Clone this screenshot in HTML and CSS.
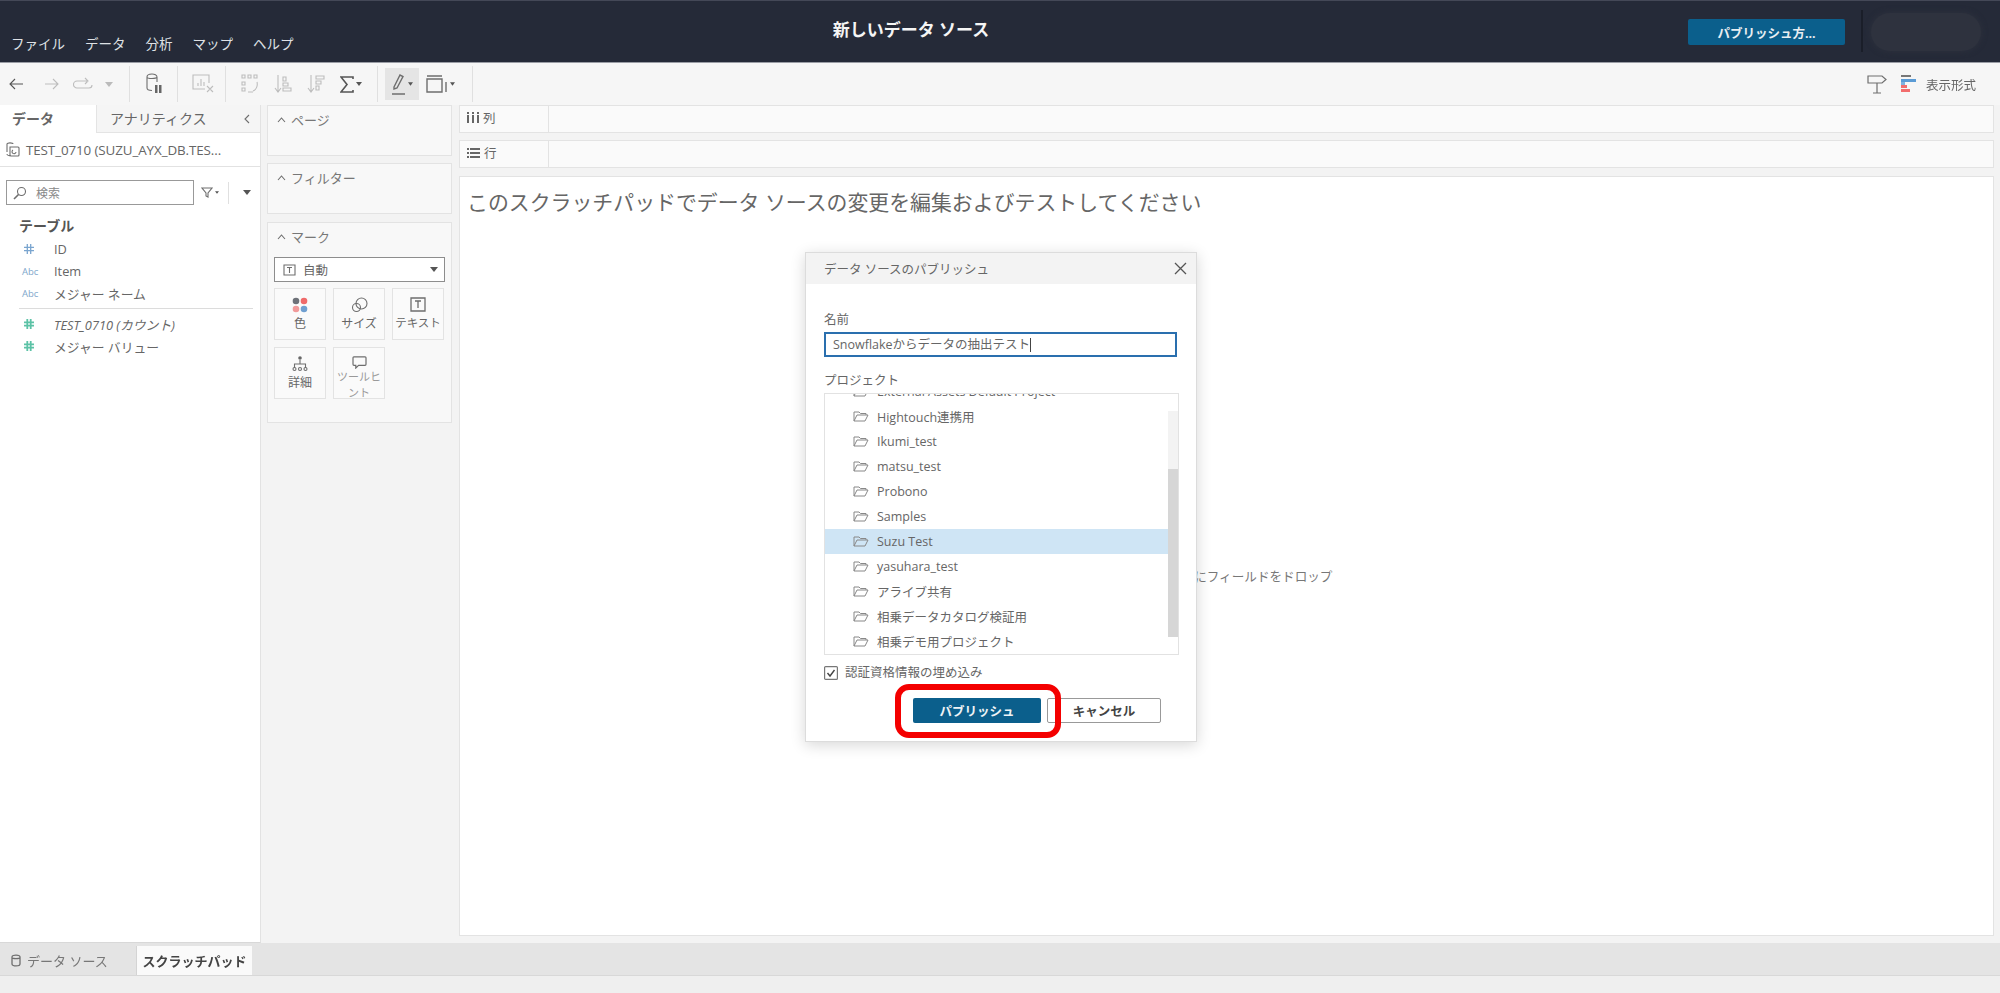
FILE: index.html
```html
<!DOCTYPE html>
<html lang="ja">
<head>
<meta charset="utf-8">
<title>新しいデータ ソース</title>
<link rel="stylesheet" href="styles.css">
</head>
<body>
<div class="app">
  <header class="topbar">
    <nav class="menu"><span>ファイル</span><span>データ</span><span>分析</span><span>マップ</span><span>ヘルプ</span></nav>
    <div class="doc-title">新しいデータ ソース</div>
    <div class="top-right">
      <button class="pub-top">パブリッシュ方...</button>
      <div class="top-div"></div>
      <div class="avatar"></div>
    </div>
  </header>

  <div class="toolbar">
    <div class="tb-group g1">
      <svg class="ic dark" width="16" height="14" viewBox="0 0 16 14"><path d="M15 7H2M7 2L2 7l5 5"/></svg>
      <svg class="ic faint fwd" width="16" height="14" viewBox="0 0 16 14"><path d="M1 7h13M9 2l5 5-5 5"/></svg>
      <svg class="ic faint redo" width="20" height="14" viewBox="0 0 20 14"><path d="M14 4H4a3 3 0 0 0 0 7h12a3 3 0 0 0 3-3M12 1l3 3-3 3"/></svg>
      <svg class="fill-faint caret8" width="8" height="5" viewBox="0 0 8 5"><path d="M0 0h8L4 5z"/></svg>
    </div>
    <div class="tb-group g2">
      <svg class="ic mid" width="16" height="22" viewBox="0 0 16 22"><path d="M1 4c0-4 10-4 10 0v5M1 4c0 2 10 2 10 0M1 4v11c0 1.500 2 2.500 5 2.500"/><path class="solid" d="M9 12h2.500v8H9zM13 12h2.500v8H13z"/></svg>
    </div>
    <div class="tb-group g3">
      <svg class="ic faint" width="23" height="20" viewBox="0 0 23 20"><path d="M13 15H1V1h16v8M6 12V9M9 12V5M12 12V8M15 12l6 6M21 12l-6 6"/></svg>
    </div>
    <div class="tb-group g4">
      <svg class="ic faint" width="18" height="20" viewBox="0 0 18 20"><path d="M1 1h3v3H1zM7 1h3v3H7zM13 1h3v3h-3zM1 8h3v3H1zM1 14h3v3H1zM7 18h5M16 8c1 4-1 8-4 9"/></svg>
      <svg class="ic faint" width="18" height="20" viewBox="0 0 18 20"><path d="M4 1v16M1 14l3 4 3-4M9 3h3v4H9zM9 9h5v3H9zM9 14h8v3H9z"/></svg>
      <svg class="ic faint" width="18" height="20" viewBox="0 0 18 20"><path d="M4 1v16M1 14l3 4 3-4M9 2h8v3H9zM9 7h5v3H9zM9 12h3v4H9z"/></svg>
      <span class="tool-pair"><svg class="ic dark" width="14" height="17" viewBox="0 0 14 17"><path d="M13 3V1H1l6 7.500L1 16h12v-2" stroke-width="1.600"/></svg><svg class="fill-dark" width="6" height="4" viewBox="0 0 6 4"><path d="M0 0h6L3 4z"/></svg></span>
    </div>
    <div class="tb-group g5">
      <span class="tool-pair active"><svg class="ic mid" width="15" height="21" viewBox="0 0 15 21"><path d="M3 13L9 1l3 1.500L6 14l-3 1zM1 20h13" stroke-width="1.400"/></svg><svg class="fill-dark" width="5" height="4" viewBox="0 0 6 4"><path d="M0 0h6L3 4z"/></svg></span>
      <span class="tool-pair"><svg class="ic mid" width="22" height="20" viewBox="0 0 22 20"><path d="M1 5h15v13H1zM1 2h15M20 8v10" stroke-width="1.400"/></svg><svg class="fill-dark" width="5" height="4" viewBox="0 0 6 4"><path d="M0 0h6L3 4z"/></svg></span>
    </div>
    <div class="tb-right">
      <svg class="ic mid" width="20" height="20" viewBox="0 0 20 20"><path d="M1 2h14l4 3.500L15 9H1zM10 9v10M6 19h8" stroke-width="1.200"/></svg>
      <span class="fmt">
        <svg width="15" height="18" viewBox="0 0 15 18"><path fill="#777" d="M0 0h10v2H0z"/><path fill="#5b9bd5" d="M0 4h15v3H0z"/><path fill="#7fb2e0" d="M0 7h4v3H0z"/><path fill="#f26d6d" d="M0 10h6v3H0zM0 14h9v3H0z"/></svg>
        <span>表示形式</span>
      </span>
    </div>
  </div>

  <main class="main">
    <aside class="data-pane">
      <div class="tabs">
        <div class="tab on">データ</div>
        <div class="tab off">アナリティクス<svg class="ic mid chev" width="6" height="10" viewBox="0 0 6 10"><path d="M5 1L1 5l4 4"/></svg></div>
      </div>
      <div class="source">
        <svg class="ic mid" width="14" height="15" viewBox="0 0 14 15"><path d="M1 10V2c0-1.500 6-1.500 6 0M5 14c-2 0-4-1-4-2M4 5h8a1 1 0 0 1 1 1v7a1 1 0 0 1-1 1H5a1 1 0 0 1-1-1zM7 8a2 2 0 1 0 3 2"/></svg>
        <span>TEST_0710 (SUZU_AYX_DB.TES...</span>
      </div>
      <div class="search-row">
        <div class="search">
          <svg class="ic mid" width="14" height="14" viewBox="0 0 14 14"><circle cx="8.500" cy="5.500" r="4"/><path d="M5.500 8.500L1 13" stroke-width="1.600"/></svg>
          <span>検索</span>
        </div>
        <svg class="ic mid" width="12" height="11" viewBox="0 0 12 11"><path d="M1 1h10L7 6v4L5 9V6z"/></svg>
        <svg class="fill-dark tiny" width="4" height="3" viewBox="0 0 6 4"><path d="M0 0h6L3 4z"/></svg>
        <div class="search-sep"></div>
        <svg class="fill-dark" width="8" height="5" viewBox="0 0 8 5"><path d="M0 0h8L4 5z"/></svg>
      </div>
      <div class="group-title">テーブル</div>
      <div class="field"><svg class="type-hash blue" width="10" height="10" viewBox="0 0 10 10"><path d="M3.300 0v10M6.700 0v10M0 3.300h10M0 6.700h10"/></svg><span>ID</span></div>
      <div class="field"><span class="type abc">Abc</span><span>Item</span></div>
      <div class="field"><span class="type abc">Abc</span><span>メジャー ネーム</span></div>
      <div class="field-div"></div>
      <div class="field"><svg class="type-hash green" width="10" height="10" viewBox="0 0 10 10"><path d="M3.300 0v10M6.700 0v10M0 3.300h10M0 6.700h10"/></svg><span class="ital">TEST_0710 (カウント)</span></div>
      <div class="field"><svg class="type-hash green" width="10" height="10" viewBox="0 0 10 10"><path d="M3.300 0v10M6.700 0v10M0 3.300h10M0 6.700h10"/></svg><span>メジャー バリュー</span></div>
    </aside>

    <section class="cards">
      <div class="card short"><div class="card-title"><svg class="ic mid" width="9" height="6" viewBox="0 0 9 6"><path d="M1 5l3.500-4L8 5"/></svg>ページ</div></div>
      <div class="card short"><div class="card-title"><svg class="ic mid" width="9" height="6" viewBox="0 0 9 6"><path d="M1 5l3.500-4L8 5"/></svg>フィルター</div></div>
      <div class="card marks">
        <div class="card-title"><svg class="ic mid" width="9" height="6" viewBox="0 0 9 6"><path d="M1 5l3.500-4L8 5"/></svg>マーク</div>
        <div class="mark-select">
          <svg class="ic mid" width="13" height="12" viewBox="0 0 13 12"><path d="M1 1h11v10H1zM4 3.500h5M6.500 3.500V9"/></svg>
          <span>自動</span>
          <svg class="fill-dark sel-caret" width="8" height="5" viewBox="0 0 8 5"><path d="M0 0h8L4 5z"/></svg>
        </div>
        <div class="mark-grid">
          <div class="mark-btn">
            <svg width="16" height="16" viewBox="0 0 16 16"><circle cx="4" cy="4" r="3.300" fill="#6d7178"/><circle cx="12" cy="4" r="3.300" fill="#ef6a6a"/><circle cx="4" cy="12" r="3.300" fill="#f19a9a"/><circle cx="12" cy="12" r="3.300" fill="#6f9fd0"/></svg>
            <span>色</span>
          </div>
          <div class="mark-btn">
            <svg class="ic mid" width="17" height="16" viewBox="0 0 17 16"><circle cx="10.500" cy="6.500" r="5.500"/><circle cx="5.500" cy="10.500" r="4"/></svg>
            <span>サイズ</span>
          </div>
          <div class="mark-btn">
            <svg class="ic mid" width="16" height="15" viewBox="0 0 16 15"><path d="M1 1h14v13H1zM5 4h6M8 4v7" stroke-width="1.300"/></svg>
            <span class="nowrap">テキスト</span>
          </div>
          <div class="mark-btn">
            <svg class="ic mid" width="16" height="16" viewBox="0 0 16 16"><circle class="solid" cx="8" cy="2" r="1.800"/><path d="M8 4v4M2.500 12V8h11v4"/><circle cx="2.500" cy="13" r="1.500"/><circle cx="8" cy="13" r="1.500"/><circle cx="13.500" cy="13" r="1.500"/></svg>
            <span>詳細</span>
          </div>
          <div class="mark-btn tip">
            <svg class="ic mid" width="15" height="13" viewBox="0 0 16 14"><path d="M2 1h12a1 1 0 0 1 1 1v7a1 1 0 0 1-1 1H7l-3 3v-3H2a1 1 0 0 1-1-1V2a1 1 0 0 1 1-1z" stroke-width="1.300"/></svg>
            <span>ツールヒント</span>
          </div>
        </div>
      </div>
    </section>

    <section class="work">
      <div class="shelf"><div class="shelf-label"><svg class="solid-ic" width="12" height="11" viewBox="0 0 12 11"><path d="M0 0h2v2H0zM0 3h2v8H0zM5 0h2v2H5zM5 3h2v8H5zM10 0h2v2h-2zM10 3h2v8h-2z"/></svg>列</div></div>
      <div class="shelf"><div class="shelf-label"><svg class="solid-ic" width="13" height="10" viewBox="0 0 13 10"><path d="M0 0h2v2H0zM3 0h10v2H3zM0 4h2v2H0zM3 4h10v2H3zM0 8h2v2H0zM3 8h10v2H3z"/></svg>行</div></div>
      <div class="canvas">
        <h1 class="sheet-title">このスクラッチパッドでデータ ソースの変更を編集およびテストしてください</h1>
        <div class="drop">ここにフィールドをドロップ</div>
      </div>
    </section>

    <div class="dialog">
      <div class="dlg-head">
        <span>データ ソースのパブリッシュ</span>
        <svg class="ic dark" width="13" height="13" viewBox="0 0 13 13"><path d="M1 1l11 11M12 1L1 12" stroke-width="1.300"/></svg>
      </div>
      <div class="dlg-body">
        <div class="dlg-label">名前</div>
        <div class="name-input">Snowflakeからデータの抽出テスト<i class="cursor"></i></div>
        <div class="dlg-label second">プロジェクト</div>
        <div class="tree">
          <div class="tree-rows">
            <div class="row"><svg class="folder" viewBox="0 0 16 11"><path d="M1 10V1h5l1.500 1.500H13V4M1 10h11l3-6H4z"/></svg>External Assets Default Project</div>
            <div class="row"><svg class="folder" viewBox="0 0 16 11"><path d="M1 10V1h5l1.500 1.500H13V4M1 10h11l3-6H4z"/></svg>Hightouch連携用</div>
            <div class="row"><svg class="folder" viewBox="0 0 16 11"><path d="M1 10V1h5l1.500 1.500H13V4M1 10h11l3-6H4z"/></svg>Ikumi_test</div>
            <div class="row"><svg class="folder" viewBox="0 0 16 11"><path d="M1 10V1h5l1.500 1.500H13V4M1 10h11l3-6H4z"/></svg>matsu_test</div>
            <div class="row"><svg class="folder" viewBox="0 0 16 11"><path d="M1 10V1h5l1.500 1.500H13V4M1 10h11l3-6H4z"/></svg>Probono</div>
            <div class="row"><svg class="folder" viewBox="0 0 16 11"><path d="M1 10V1h5l1.500 1.500H13V4M1 10h11l3-6H4z"/></svg>Samples</div>
            <div class="row sel"><svg class="folder" viewBox="0 0 16 11"><path d="M1 10V1h5l1.500 1.500H13V4M1 10h11l3-6H4z"/></svg>Suzu Test</div>
            <div class="row"><svg class="folder" viewBox="0 0 16 11"><path d="M1 10V1h5l1.500 1.500H13V4M1 10h11l3-6H4z"/></svg>yasuhara_test</div>
            <div class="row"><svg class="folder" viewBox="0 0 16 11"><path d="M1 10V1h5l1.500 1.500H13V4M1 10h11l3-6H4z"/></svg>アライブ共有</div>
            <div class="row"><svg class="folder" viewBox="0 0 16 11"><path d="M1 10V1h5l1.500 1.500H13V4M1 10h11l3-6H4z"/></svg>相乗データカタログ検証用</div>
            <div class="row"><svg class="folder" viewBox="0 0 16 11"><path d="M1 10V1h5l1.500 1.500H13V4M1 10h11l3-6H4z"/></svg>相乗デモ用プロジェクト</div>
          </div>
          <div class="scroll"><div class="track"><div class="thumb"></div></div></div>
        </div>
        <div class="check-row">
          <svg class="check" width="14" height="14" viewBox="0 0 14 14"><rect x=".6" y=".6" width="12.800" height="12.800" rx="1" fill="#fff" stroke="#777" stroke-width="1.200"/><path d="M3.500 7l2.500 3 4.500-6" fill="none" stroke="#444" stroke-width="1.400"/></svg>
          <span>認証資格情報の埋め込み</span>
        </div>
        <div class="dlg-actions">
          <button class="btn-primary">パブリッシュ</button>
          <button class="btn-cancel">キャンセル</button>
        </div>
      </div>
      <div class="callout"></div>
    </div>
  </main>

  <div class="sheet-tabs">
    <div class="stab ds">
      <svg class="ic mid" width="10" height="13" viewBox="0 0 10 13"><path d="M1 3c0-2.500 8-2.500 8 0v7c0 2.500-8 2.500-8 0zM1 3.500c0 1.500 8 1.500 8 0" stroke-width="1.300"/></svg>
      データ ソース
    </div>
    <div class="stab cur">スクラッチパッド</div>
  </div>
  <div class="status"></div>
</div>
</body>
</html>
```

FILE: styles.css
```css
* { box-sizing: border-box; }
html, body { margin: 0; padding: 0; height: 100%; overflow: hidden; background: #f3f3f3; }
body { font-family: "Open Sans", "Noto Sans CJK JP", sans-serif; color: #555; }
button { font-family: inherit; }

.app { width: 2000px; height: 993px; display: flex; flex-direction: column; overflow: hidden; filter: blur(0.45px); }

.ic { fill: none; stroke: #666; stroke-width: 1.100; flex: none; }
.ic.dark { stroke: #555; }
.ic.mid { stroke: #6e6e6e; }
.ic.faint { stroke: #bdbdbd; }
.ic .solid { fill: #666; stroke: none; }
.fill-dark { fill: #555; }
.fill-faint { fill: #bbb; }
.solid-ic { fill: #666; }

/* header */
.topbar { height: 63px; flex: none; display: flex; background: #252a38; border-top: 1px solid #444857; border-bottom: 1px solid #9a9da5; color: #fff; }
.menu { width: 305px; padding: 36px 0 0 11px; display: flex; gap: 20px; font-size: 13.500px; line-height: 15px; color: #dfe1e5; white-space: nowrap; }
.doc-title { flex: 1; text-align: center; font-size: 17px; font-weight: 700; line-height: 57px; color: #f5f5f5; }
.top-right { width: 483px; display: flex; align-items: flex-start; justify-content: flex-end; }
.pub-top { width: 157px; height: 26px; margin-top: 18px; border: 0; border-radius: 2px; background: #0b5f8c; color: #e8eef2; font-size: 12.500px; font-weight: 700; padding: 0; }
.top-div { width: 2px; height: 42px; margin: 9px 8px 0 16px; background: #1a1e29; }
.avatar { width: 110px; height: 38px; margin: 12px 19px 0 0; border-radius: 19px; background: #2e323e; box-shadow: 0 0 6px #2e323e; }

/* toolbar */
.toolbar { height: 42px; flex: none; display: flex; align-items: center; background: #f6f6f6; }
.tb-group { height: 36px; display: flex; align-items: center; border-right: 1px solid #e0e0e0; }
.g1 { width: 130px; padding-left: 8px; }
.fwd { margin-left: 20px; }
.redo { margin-left: 13px; }
.caret8 { margin-left: 12px; }
.g2 { width: 48px; padding-left: 16px; }
.g3 { width: 48px; padding-left: 14px; }
.g4 { width: 152px; padding-left: 15px; gap: 15px; }
.g5 { width: 95px; padding-left: 7px; gap: 7px; border-right: 1px solid #e0e0e0; }
.tool-pair { display: inline-flex; align-items: center; gap: 2px; }
.tool-pair.active { width: 34px; height: 32px; justify-content: center; background: #e5e5e5; }
.tb-right { margin-left: auto; display: flex; align-items: center; gap: 14px; padding-right: 24px; }
.fmt { display: flex; align-items: center; gap: 10px; font-size: 12.500px; color: #666; }

/* main */
.main { flex: 1; min-height: 0; position: relative; display: flex; background: #f3f3f3; }

.data-pane { width: 261px; flex: none; background: #fff; border-right: 1px solid #e2e2e2; border-bottom: 1px solid #d8d8d8; }
.tabs { height: 28px; display: flex; }
.tab { font-size: 14px; line-height: 28px; display: flex; }
.tab.on { width: 96px; padding-left: 12px; font-weight: 700; color: #666; }
.tab.off { flex: 1; padding-left: 13px; background: #f5f5f5; border: 1px solid #e4e4e4; border-top: 0; border-right: 0; color: #666; position: relative; justify-content: space-between; align-items: center; padding-right: 10px; }
.source { height: 34px; display: flex; align-items: center; gap: 6px; padding-left: 6px; font-size: 13.400px; letter-spacing: -0.1px; color: #666; border-bottom: 1px solid #e2e2e2; white-space: nowrap; }
.search-row { height: 25px; margin-top: 13px; display: flex; align-items: center; padding-left: 6px; }
.search { width: 188px; height: 25px; margin-right: 7px; display: flex; align-items: center; gap: 9px; padding-left: 6px; border: 1px solid #999; font-size: 12px; color: #888; background: #fff; }
.tiny { margin-left: 2px; }
.search-sep { width: 1px; height: 22px; margin: 0 14px 0 9px; background: #e0e0e0; }
.group-title { margin: 11px 0 2px 19px; font-size: 14px; font-weight: 700; line-height: 20px; color: #555; }
.field { height: 22px; display: flex; align-items: center; font-size: 12.800px; color: #666; white-space: nowrap; }
.type { width: 54px; padding-left: 22px; text-align: left; }
.type-hash { margin: 0 20px 0 24px; flex: none; fill: none; stroke-width: 1.300; }
.type-hash.blue { stroke: #7aa5cf; }
.type-hash.green { stroke: #5cc2a6; stroke-width: 1.800; }
.type.abc { color: #7ea6cb; font-size: 9.500px; }
.ital { font-style: italic; }
.field-div { height: 1px; margin: 4px 7px 4px 19px; background: #dcdcdc; }

.cards { width: 191px; flex: none; padding: 0 0 0 6px; display: flex; flex-direction: column; gap: 7px; }
.card { background: #f8f8f8; border: 1px solid #e3e3e3; width: 185px; }
.card.short { height: 51px; }
.card.marks { height: 201px; margin-top: 1px; }
.card-title { display: flex; align-items: center; gap: 5px; padding: 5px 0 0 9px; font-size: 13px; line-height: 18px; color: #777; }
.mark-select { height: 25px; margin: 11px 6px 0; display: flex; align-items: center; gap: 7px; padding: 0 6px 0 8px; border: 1px solid #8d8d8d; background: #fff; font-size: 12.500px; color: #666; }
.sel-caret { margin-left: auto; }
.mark-grid { margin: 6px 6px 0; display: grid; grid-template-columns: repeat(3, 52px); gap: 7px; }
.mark-btn { height: 52px; overflow: hidden; display: flex; flex-direction: column; align-items: center; padding-top: 8px; gap: 3px; border: 1px solid #e3e3e3; background: #fafafa; font-size: 12px; line-height: 15px; color: #666; text-align: center; }
.mark-btn svg { flex: none; }
.mark-btn .nowrap { white-space: nowrap; font-size: 11.500px; }
.mark-btn.tip { color: #999; font-size: 11px; line-height: 16px; gap: 0; }

.work { flex: 1; min-width: 0; padding: 0 6px 0 7px; display: flex; flex-direction: column; gap: 7px; }
.shelf { height: 28px; flex: none; border: 1px solid #e3e3e3; background: #fafafa; }
.shelf-label { width: 89px; height: 100%; display: flex; align-items: center; gap: 4px; padding: 0 0 3px 7px; border-right: 1px solid #e3e3e3; font-size: 12.500px; color: #666; }
.canvas { flex: 1; margin: 1px 0 7px; background: #fff; border: 1px solid #e3e3e3; display: flex; flex-direction: column; }
.sheet-title { margin: 12px 0 0 7px; font-size: 20.900px; font-weight: 400; line-height: 26px; color: #666; white-space: nowrap; }
.drop { margin: 354px 0 0 709px; font-size: 12.600px; line-height: 16px; color: #777; white-space: nowrap; }

/* dialog */
.dialog { position: absolute; left: 805px; top: 147px; width: 392px; height: 490px; background: #fff; border: 1px solid #dcdcdc; box-shadow: 0 3px 14px rgba(0,0,0,.16); }
.dlg-head { height: 31px; display: flex; align-items: center; justify-content: space-between; padding: 0 9px 0 18px; background: #f3f3f3; font-size: 12.500px; color: #666; }
.dlg-body { padding: 27px 17px 0 18px; }
.dlg-label { font-size: 12.500px; line-height: 18px; color: #666; }
.dlg-label.second { margin-top: 15px; }
.name-input { width: 353px; height: 25px; margin-top: 3px; padding-left: 7px; border: 2px solid #2a6fae; font-size: 12.500px; line-height: 21px; color: #666; white-space: nowrap; display: flex; align-items: center; }
.cursor { display: inline-block; width: 1px; height: 14px; background: #444; }
.tree { width: 355px; height: 262px; margin-top: 3px; display: flex; border: 1px solid #e2e2e2; overflow: hidden; }
.tree-rows { flex: 1; margin-top: -15px; }
.row { height: 25px; display: flex; align-items: center; gap: 8px; padding-left: 28px; font-size: 12.500px; color: #666; white-space: nowrap; }
.row.sel { background: #cfe5f5; }
.folder { width: 16px; height: 11px; flex: none; fill: none; stroke: #888; stroke-width: 1; }
.scroll { width: 10px; flex: none; padding-top: 17px; }
.track { height: 226px; background: #f3f3f3; padding-top: 58px; }
.thumb { height: 168px; background: #d6d6d6; }
.check-row { margin-top: 10px; display: flex; align-items: center; gap: 7px; font-size: 12.500px; line-height: 16px; color: #666; }
.dlg-actions { margin-top: 17px; padding-right: 18px; display: flex; justify-content: flex-end; gap: 6px; }
.btn-primary { width: 128px; height: 25px; border: 0; border-radius: 2px; background: #0b5f8c; color: #eef3f6; font-size: 12.500px; font-weight: 700; padding: 0; }
.btn-cancel { width: 114px; height: 25px; border: 1px solid #999; border-radius: 2px; background: #fff; color: #444; font-size: 12.500px; font-weight: 700; padding: 0; }
.callout { position: absolute; left: 89px; top: 431px; width: 166px; height: 54px; border: 6px solid #f40000; border-radius: 14px; }

/* bottom */
.sheet-tabs { height: 32px; flex: none; display: flex; align-items: flex-end; background: #e4e4e4; }
.stab { height: 29px; display: flex; align-items: center; font-size: 13px; white-space: nowrap; }
.stab.ds { width: 137px; padding-left: 11px; gap: 6px; color: #777; border-right: 1px solid #d4d4d4; }
.stab.cur { width: 115px; justify-content: center; background: #fafafa; color: #444; font-weight: 700; }
.status { height: 18px; flex: none; background: #efefef; border-top: 1px solid #d8d8d8; }
```
